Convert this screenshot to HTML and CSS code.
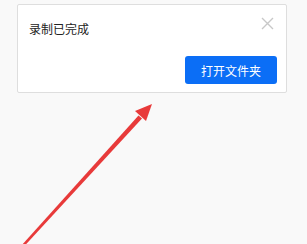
FILE: index.html
```html
<!DOCTYPE html>
<html>
<head>
<meta charset="utf-8">
<link rel="stylesheet" href="styles.css">
</head>
<body>
<div class="card">
  <div class="head">
    <span class="title">录制已完成</span>
    <svg class="close" width="13" height="13" viewBox="0 0 13 13"><path d="M1 1L12 12M12 1L1 12" stroke="#c8c8c8" stroke-width="1.4" fill="none"/></svg>
  </div>
  <div class="foot">
    <button class="btn">打开文件夹</button>
  </div>
</div>
<svg class="arrow" width="307" height="244" viewBox="0 0 307 244">
  <path d="M21 246 L138.5 115.5 L142 118.5 L23.5 247 Z" fill="#e83a3a"/>
  <path d="M152 104 L135 111 L146 121 Z" fill="#e83a3a"/>
</svg>
</body>
</html>
```
FILE: styles.css
```css
html, body { margin: 0; padding: 0; }
body {
  width: 307px; height: 244px; overflow: hidden;
  background: #f9f9f9;
  font-family: "Microsoft YaHei", "Noto Sans CJK SC", sans-serif;
  position: relative;
  padding-top: 4px; box-sizing: border-box;
}
.card {
  margin-left: 17px;
  width: 270px; height: 89px; box-sizing: border-box;
  background: #fff;
  border: 1px solid #dedede;
  border-radius: 2px;
  display: flex; flex-direction: column;
  padding: 11px 9px 8px 11px;
}
.head { display: flex; justify-content: space-between; align-items: flex-start; }
.title { font-size: 12px; color: #222; margin-top: 5px; line-height: 16px; }
.close { margin-top: 1px; margin-right: 3px; }
.foot { display: flex; justify-content: flex-end; margin-top: auto; }
.btn {
  width: 92px; height: 28px;
  background: #0b6ef6; color: #fff; border: none; border-radius: 3px;
  font-family: inherit; font-size: 12px; padding: 0;
}
.arrow { position: absolute; left: 0; top: 0; }
```
